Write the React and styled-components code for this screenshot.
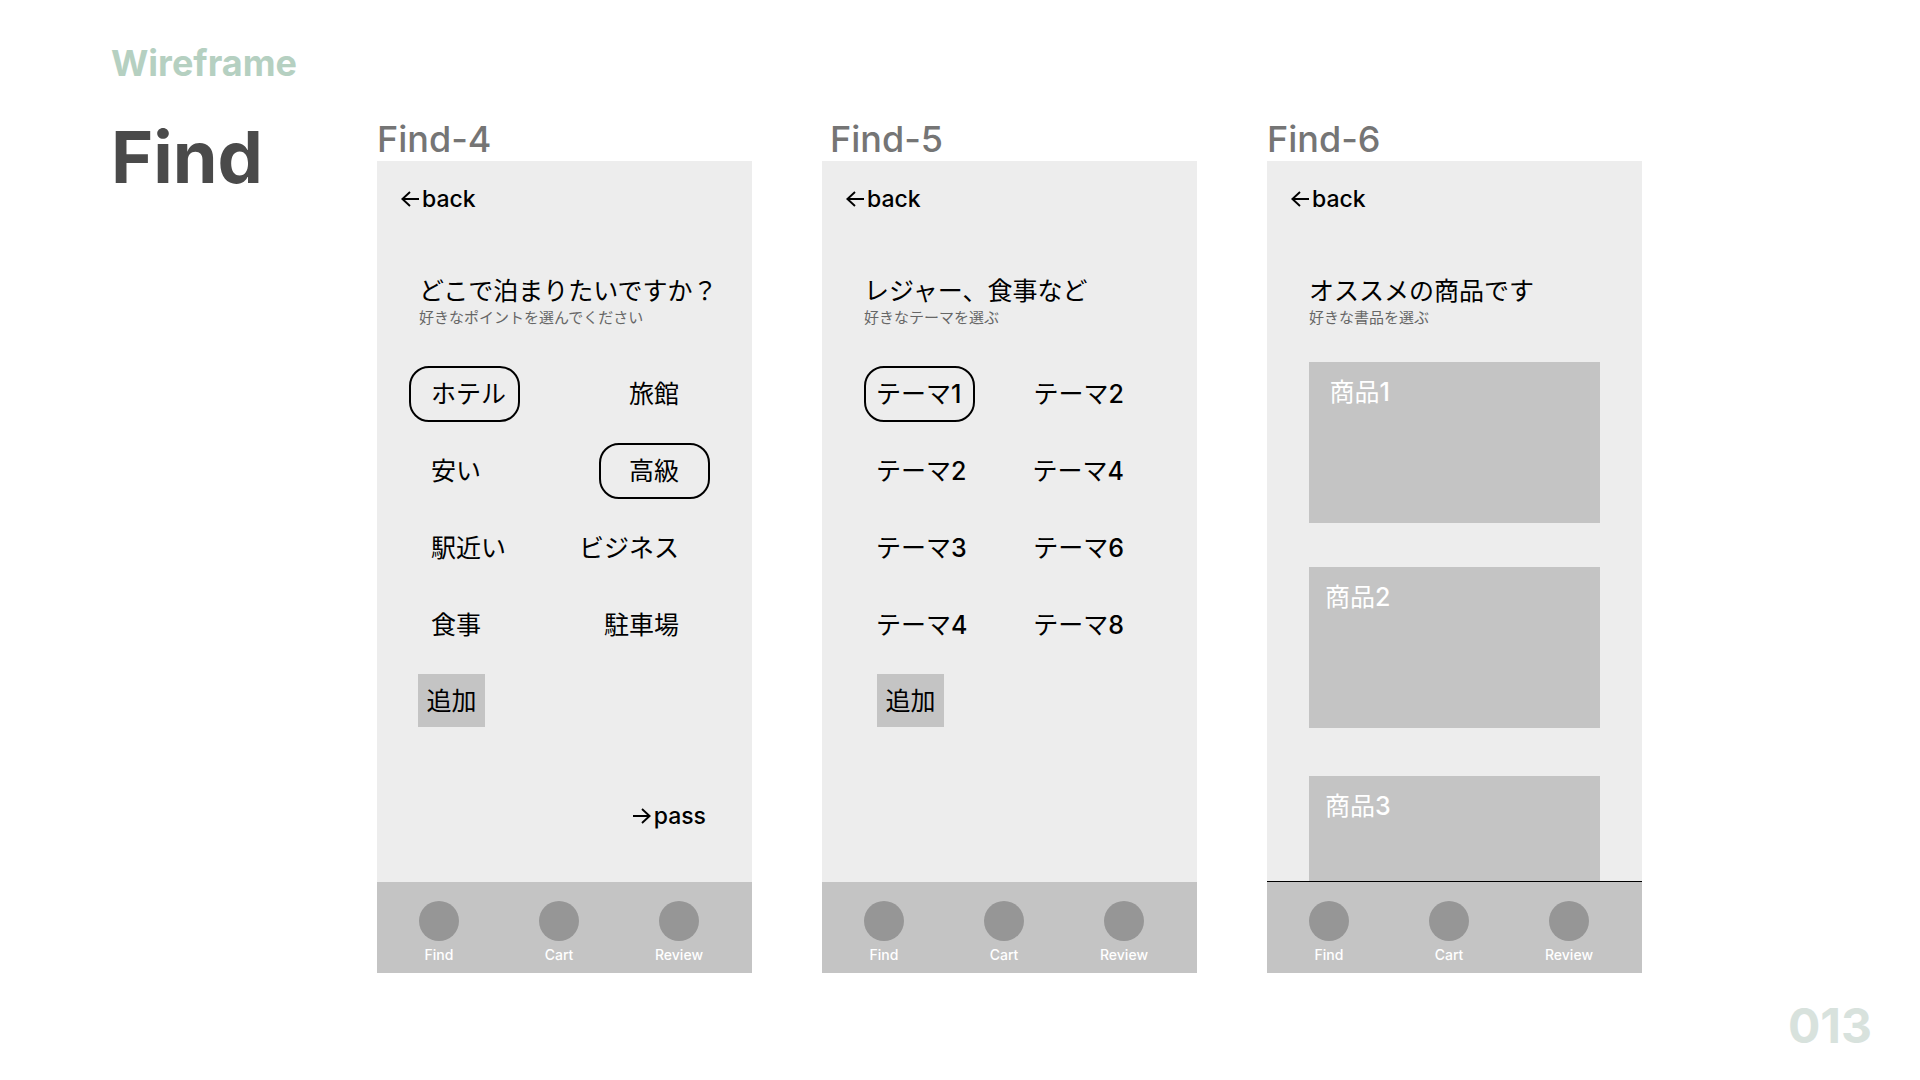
import React, { useState } from "react";
import styled, { createGlobalStyle } from "styled-components";

const GlobalStyle = createGlobalStyle`
  *, *::before, *::after { box-sizing: border-box; }
  body {
    margin: 0;
    background: #ffffff;
    color: #000000;
    font-family: Inter, "Noto Sans CJK JP", sans-serif;
  }
  h1, h2, h3, p, ul { margin: 0; padding: 0; font-weight: 400; }
  ul { list-style: none; }
  button { font: inherit; color: inherit; border: 0; padding: 0; background: none; cursor: pointer; }
  a { color: inherit; text-decoration: none; }
`;

const Page = styled.div`
  min-height: 100vh;
  display: flex;
  flex-direction: column;
  padding: 39px 48px 24px 111px;
`;

const Kicker = styled.p`
  font-size: 36px;
  line-height: 48px;
  font-weight: 700;
  color: #b5d0c1;
`;

const Board = styled.main`
  display: flex;
  align-items: flex-start;
  margin-top: 30px;
`;

const Title = styled.h1`
  flex: 0 0 266px;
  font-size: 72px;
  line-height: 80px;
  font-weight: 700;
  color: #4a4a4a;
`;

const Screens = styled.div`
  flex: 1;
  display: grid;
  grid-template-columns: repeat(3, minmax(340px, 375px));
  column-gap: 70px;
`;

const ScreenName = styled.h2`
  padding-left: ${(p) => p.$inset}px;
  font-size: 36px;
  line-height: 44px;
  font-weight: 500;
  color: #757575;
`;

const Frame = styled.section`
  display: flex;
  flex-direction: column;
  min-height: 812px;
  background: #ededed;
`;

const StepButton = styled.button`
  display: flex;
  align-items: center;
  gap: 3px;
  font-size: 23px;
  line-height: 32px;
  font-weight: 500;
`;

const BackBar = styled.div`
  display: flex;
  padding: 22px 24px 0;
`;

const PassBar = styled.div`
  display: flex;
  justify-content: flex-end;
  margin-top: auto;
  padding: 0 46px 50px 24px;
`;

const Intro = styled.header`
  padding: 60px 0 0 42px;
  white-space: nowrap;
`;

const Question = styled.h3`
  font-size: 25px;
  line-height: 32px;
`;

const Hint = styled.p`
  font-size: 15px;
  line-height: 22px;
  color: #666666;
`;

const Choices = styled.div`
  display: grid;
  grid-template-columns: auto auto;
  justify-content: space-between;
  row-gap: 21px;
  padding: 37px 42px 0 ${(p) => p.$left}px;
`;

const Choice = styled.button`
  justify-self: ${(p) => (p.$end ? "end" : "start")};
  min-width: 111px;
  height: 56px;
  padding: ${(p) => (p.$end ? "0 29px 0 0" : `0 0 0 ${p.$pad}px`)};
  border: 2px solid ${(p) => (p.$selected ? "#000000" : "transparent")};
  border-radius: 20px;
  font-size: 25px;
  line-height: 32px;
  text-align: ${(p) => (p.$end ? "right" : "left")};
  white-space: nowrap;
`;

const Digit = styled.span`
  font-weight: 500;
`;

const AddButton = styled.button`
  width: 67px;
  height: 53px;
  margin-left: ${(p) => p.$inset}px;
  background: #c4c4c4;
  font-size: 25px;
  line-height: 32px;
`;

const ProductList = styled.ul`
  flex: 1 1 0;
  height: 0;
  overflow: hidden;
  padding: 33px 42px 0;
`;

const Product = styled.li`
  height: 161px;
  margin-bottom: ${(p) => p.$gap}px;
  padding: 14px 16px;
  background: #c4c4c4;
  color: #ffffff;
`;

const ProductName = styled.span`
  display: inline-block;
  min-width: 65px;
  font-size: 25px;
  line-height: 32px;
  text-align: right;
`;

const TabBar = styled.nav`
  display: grid;
  grid-template-columns: repeat(3, 1fr);
  margin-top: ${(p) => (p.$push ? "auto" : "0")};
  padding: 19px 13px 8px 2px;
  border-top: ${(p) => (p.$ruled ? "1px solid #000000" : "0")};
  background: #c4c4c4;
`;

const Tab = styled.a`
  display: flex;
  flex-direction: column;
  align-items: center;
  gap: 4px;
  color: #ffffff;
  font-size: 14px;
  line-height: 20px;
  font-weight: 500;
`;

const TabDot = styled.span`
  width: 40px;
  height: 40px;
  border-radius: 50%;
  background: #969696;
`;

const PageNumber = styled.footer`
  margin-top: auto;
  font-size: 48px;
  line-height: 60px;
  font-weight: 700;
  color: #d8e2dd;
  text-align: right;
`;

const Arrow = ({ right }) => (
  <svg width="18" height="18" viewBox="0 0 18 18" fill="none" stroke="currentColor" strokeWidth="1.9" aria-hidden="true">
    <path d={right ? "M0 9H16.6M9 2L16.6 9L9 16" : "M18 9H1.4M9 2L1.4 9L9 16"} />
  </svg>
);

const Back = () => (
  <BackBar>
    <StepButton type="button">
      <Arrow />
      back
    </StepButton>
  </BackBar>
);

const withDigit = (text) => {
  const [, name, digit] = text.match(/^(\D*)(\d*)$/);
  return (
    <>
      {name}
      {digit && <Digit>{digit}</Digit>}
    </>
  );
};

const Tabs = ({ ruled, push }) => (
  <TabBar $ruled={ruled} $push={push} aria-label="Main">
    {["Find", "Cart", "Review"].map((tab) => (
      <Tab key={tab} href={`#${tab.toLowerCase()}`}>
        <TabDot />
        {tab}
      </Tab>
    ))}
  </TabBar>
);

const ChoiceGrid = ({ items, initial, left, pad, addInset }) => {
  const [picked, setPicked] = useState(initial);
  const toggle = (i) =>
    setPicked((now) => (now.includes(i) ? now.filter((n) => n !== i) : [...now, i]));
  return (
    <Choices $left={left}>
      {items.map((item, i) => (
        <Choice
          key={i}
          type="button"
          aria-pressed={picked.includes(i)}
          $selected={picked.includes(i)}
          $end={i % 2 === 1}
          $pad={pad}
          onClick={() => toggle(i)}
        >
          {withDigit(item)}
        </Choice>
      ))}
      <AddButton type="button" $inset={addInset}>追加</AddButton>
    </Choices>
  );
};

const stays = ["ホテル", "旅館", "安い", "高級", "駅近い", "ビジネス", "食事", "駐車場"];
const themes = ["テーマ1", "テーマ2", "テーマ2", "テーマ4", "テーマ3", "テーマ6", "テーマ4", "テーマ8"];
const products = [
  { name: "商品1", gap: 44 },
  { name: "商品2", gap: 48 },
  { name: "商品3", gap: 0 },
];

export default function App() {
  return (
    <Page>
      <GlobalStyle />
      <Kicker>Wireframe</Kicker>
      <Board>
        <Title>Find</Title>
        <Screens>
          <div>
            <ScreenName $inset={0}>Find-4</ScreenName>
            <Frame>
              <Back />
              <Intro>
                <Question>どこで泊まりたいですか？</Question>
                <Hint>好きなポイントを選んでください</Hint>
              </Intro>
              <ChoiceGrid items={stays} initial={[0, 3]} left={32} pad={20} addInset={9} />
              <PassBar>
                <StepButton type="button">
                  <Arrow right />
                  pass
                </StepButton>
              </PassBar>
              <Tabs />
            </Frame>
          </div>
          <div>
            <ScreenName $inset={8}>Find-5</ScreenName>
            <Frame>
              <Back />
              <Intro>
                <Question>レジャー、食事など</Question>
                <Hint>好きなテーマを選ぶ</Hint>
              </Intro>
              <ChoiceGrid items={themes} initial={[0]} left={42} pad={10} addInset={13} />
              <Tabs push />
            </Frame>
          </div>
          <div>
            <ScreenName $inset={0}>Find-6</ScreenName>
            <Frame>
              <Back />
              <Intro>
                <Question>オススメの商品です</Question>
                <Hint>好きな書品を選ぶ</Hint>
              </Intro>
              <ProductList>
                {products.map(({ name, gap }) => (
                  <Product key={name} $gap={gap}>
                    <ProductName>{withDigit(name)}</ProductName>
                  </Product>
                ))}
              </ProductList>
              <Tabs ruled />
            </Frame>
          </div>
        </Screens>
      </Board>
      <PageNumber>013</PageNumber>
    </Page>
  );
}
